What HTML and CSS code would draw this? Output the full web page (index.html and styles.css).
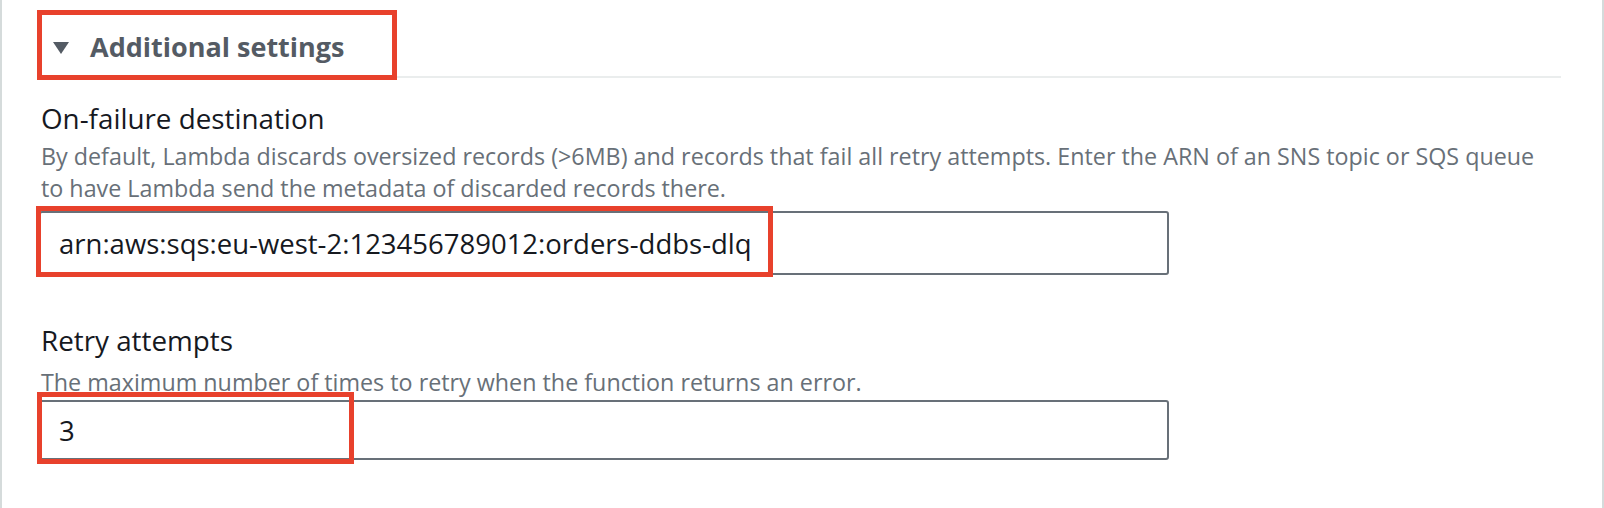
FILE: index.html
```html
<!DOCTYPE html>
<html lang="en">
<head>
  <meta charset="UTF-8">
  <meta name="viewport" content="width=device-width, initial-scale=1.0">
  <title>Additional settings</title>
  <link rel="stylesheet" href="styles.css">
</head>
<body>
  <div class="panel">
    <!-- Expander header -->
    <div class="expander">
      <div class="expander-header">
        <span class="caret"></span>
        <span class="expander-title">Additional settings</span>
      </div>
      <span class="highlight hl-header"></span>
    </div>

    <!-- On-failure destination -->
    <div class="field first">
      <div class="field-label">On-failure destination</div>
      <div class="field-desc">By default, Lambda discards oversized records (&gt;6MB) and records that fail all retry attempts. Enter the ARN of an SNS topic or SQS queue to have Lambda send the metadata of discarded records there.</div>
      <div class="input-wrap">
        <input class="text-input tall" type="text" value="arn:aws:sqs:eu-west-2:123456789012:orders-ddbs-dlq">
        <span class="highlight hl-arn"></span>
      </div>
    </div>

    <!-- Retry attempts -->
    <div class="field second">
      <div class="field-label">Retry attempts</div>
      <div class="field-desc short">The maximum number of times to retry when the function returns an error.</div>
      <div class="input-wrap">
        <input class="text-input" type="text" value="3">
        <span class="highlight hl-retry"></span>
      </div>
    </div>
  </div>
</body>
</html>
```

FILE: styles.css
```css
body {
  margin: 0;
  font-family: "Open Sans", Arial, sans-serif;
  background: #fff;
  overflow: hidden;
}
.panel {
  height: 508px;
  box-sizing: border-box;
  border-left: 2px solid #d5dbdb;
  border-right: 2px solid #d5dbdb;
  padding: 0 41px 0 35px;
}

/* Expander */
.expander {
  position: relative;
  padding-top: 10px;
}
.expander-header {
  display: flex;
  align-items: center;
  box-sizing: border-box;
  height: 68px;
  padding-top: 10px;
  padding-left: 16px;
  border-bottom: 2px solid #eaeded;
}
.caret {
  width: 0;
  height: 0;
  border-left: 8px solid transparent;
  border-right: 8px solid transparent;
  border-top: 12px solid #545b64;
  margin-right: 21px;
}
.expander-title {
  font-size: 27px;
  font-weight: bold;
  color: #545b64;
  margin-top: -3px;
}

/* Fields */
.field {
  padding-left: 4px;
}
.field.first {
  margin-top: 25px;
}
.field.second {
  margin-top: 50px;
}
.field-label {
  font-size: 27.8px;
  line-height: 30px;
  color: #16191f;
}
.field-desc {
  margin-top: 7px;
  font-size: 23.3px;
  line-height: 32px;
  color: #687078;
  max-width: 1510px;
}
.field-desc.short {
  margin-top: 11px;
}
.input-wrap {
  position: relative;
  width: 1130px;
  margin-left: -2px;
  margin-top: 7px;
}
.field.second .input-wrap {
  margin-top: 2px;
}
.text-input {
  display: block;
  box-sizing: border-box;
  width: 100%;
  height: 60px;
  border: 2px solid #687078;
  border-radius: 3px;
  padding: 0 18px;
  font-family: "Open Sans", Arial, sans-serif;
  font-size: 27.5px;
  color: #16191f;
  background: #fff;
  outline: none;
}
.text-input.tall {
  height: 64px;
}

/* Red annotation boxes */
.highlight {
  position: absolute;
  border: 5px solid #e8412c;
  box-sizing: border-box;
  pointer-events: none;
}
.hl-header {
  left: 0;
  top: 10px;
  width: 360px;
  height: 70px;
}
.hl-arn {
  left: -3px;
  top: -5px;
  width: 737px;
  height: 71px;
}
.hl-retry {
  left: -2px;
  top: -8px;
  width: 317px;
  height: 72px;
}
```
